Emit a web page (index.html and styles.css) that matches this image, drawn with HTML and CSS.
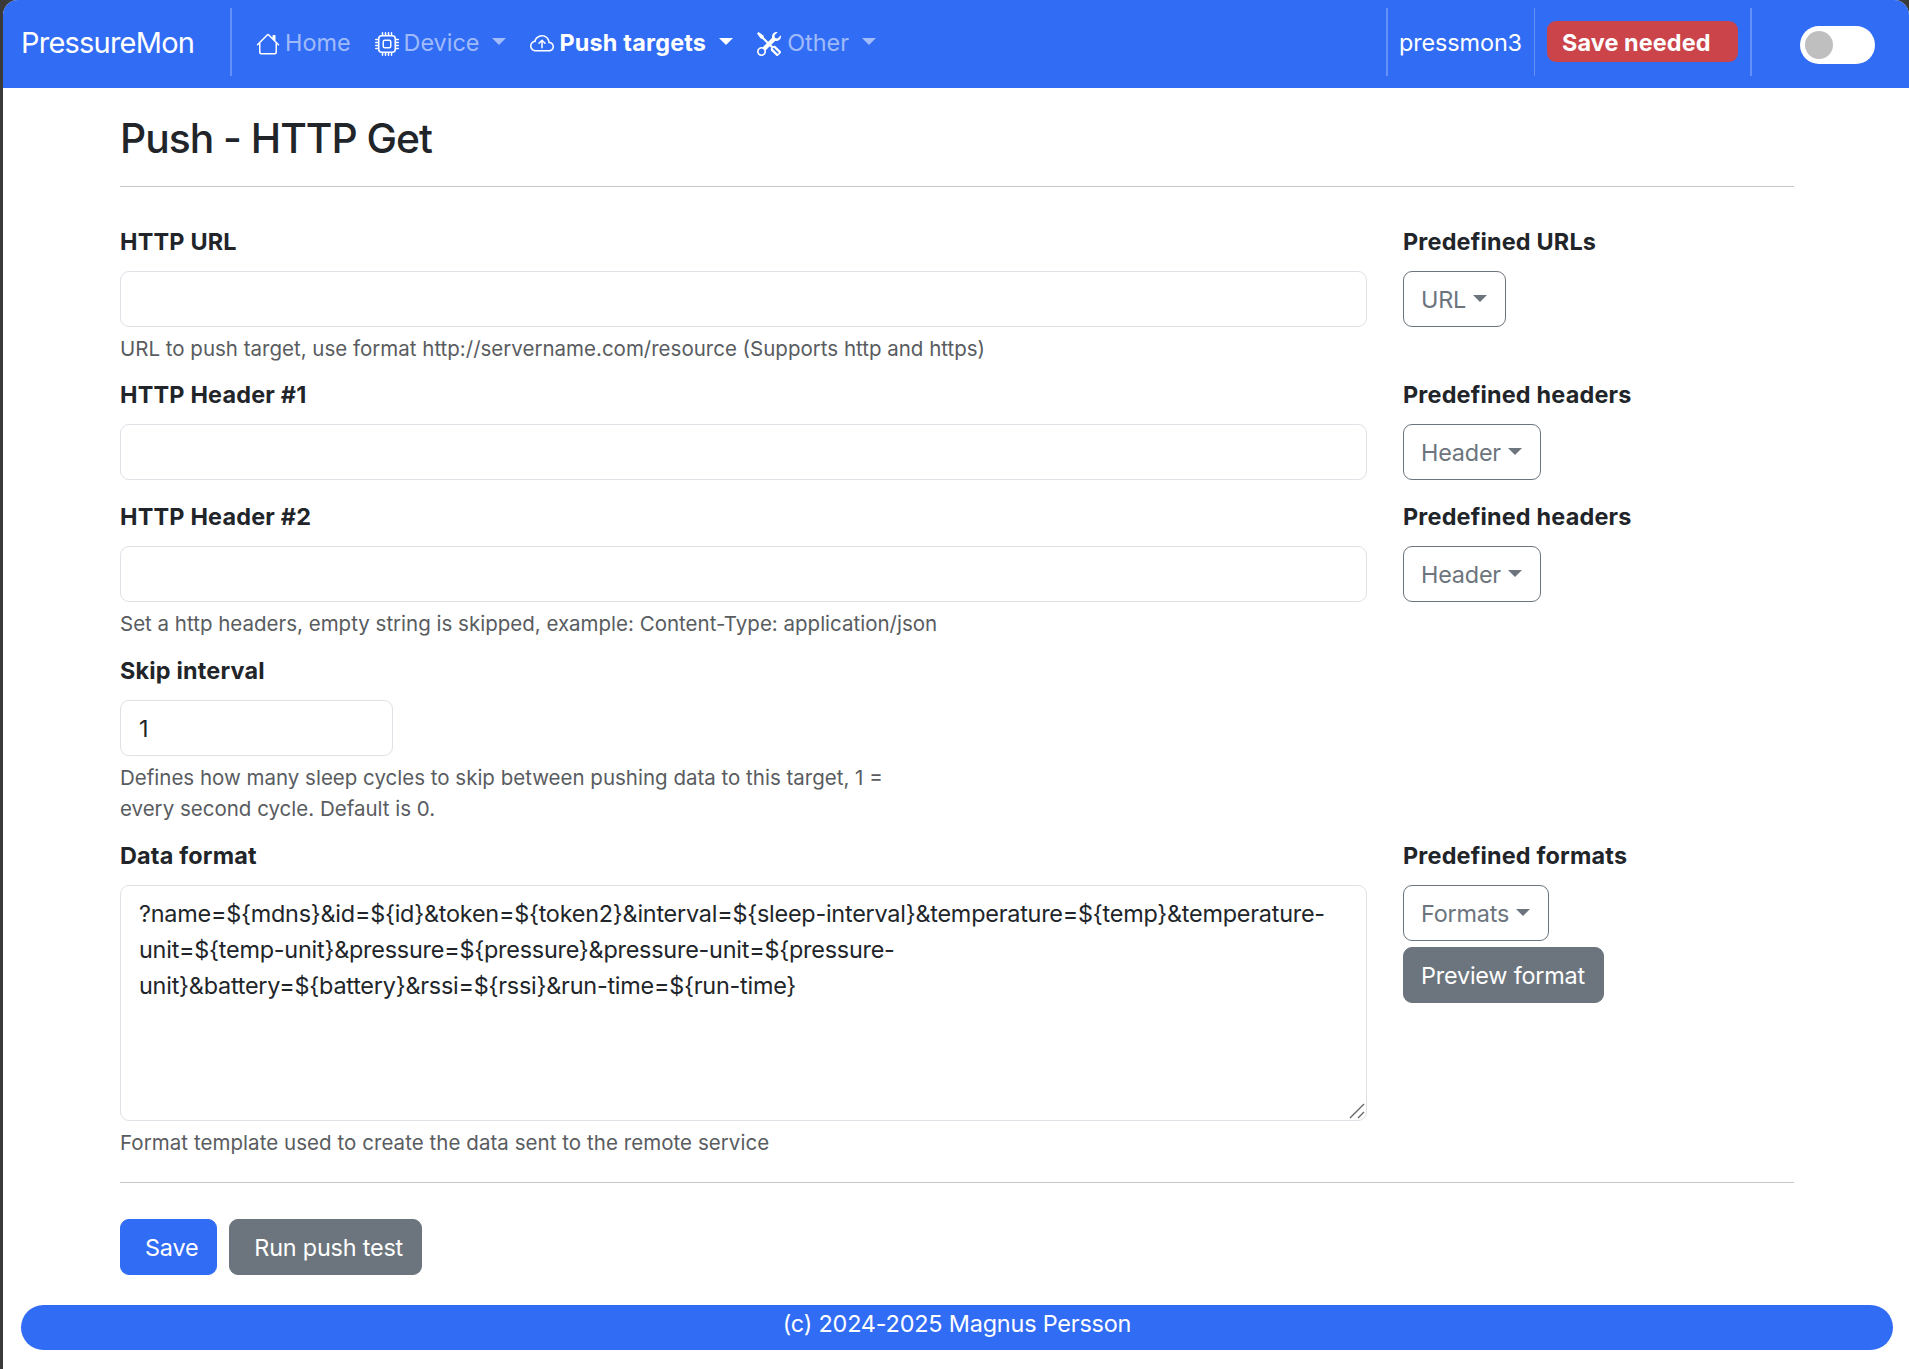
FILE: index.html
```html
<!DOCTYPE html>
<html lang="en">
<head>
<meta charset="utf-8">
<title>PressureMon</title>
<link rel="stylesheet" href="styles.css">
</head>
<body>
<div class="window">
  <nav class="navbar">
    <a class="brand">PressureMon</a>
    <div class="divider wide"></div>
    <a class="nav-link home">
      <svg class="icon" viewBox="0 0 16 16"><path d="M8.707 1.5a1 1 0 0 0-1.414 0L.646 8.146a.5.5 0 0 0 .708.708L2 8.207V13.5A1.5 1.5 0 0 0 3.5 15h9a1.5 1.5 0 0 0 1.5-1.5V8.207l.646.647a.5.5 0 0 0 .708-.708L13 5.793V2.5a.5.5 0 0 0-.5-.5h-1a.5.5 0 0 0-.5.5v1.293zM13 7.207V13.5a.5.5 0 0 1-.5.5h-9a.5.5 0 0 1-.5-.5V7.207l5-5z"/></svg>
      <span>Home</span>
    </a>
    <a class="nav-link device">
      <svg class="icon" viewBox="0 0 16 16"><path d="M5 0a.5.5 0 0 1 .5.5V2h1V.5a.5.5 0 0 1 1 0V2h1V.5a.5.5 0 0 1 1 0V2h1V.5a.5.5 0 0 1 1 0V2A2.5 2.5 0 0 1 14 4.5h1.5a.5.5 0 0 1 0 1H14v1h1.5a.5.5 0 0 1 0 1H14v1h1.5a.5.5 0 0 1 0 1H14v1h1.5a.5.5 0 0 1 0 1H14a2.5 2.5 0 0 1-2.5 2.5v1.5a.5.5 0 0 1-1 0V14h-1v1.5a.5.5 0 0 1-1 0V14h-1v1.5a.5.5 0 0 1-1 0V14h-1v1.5a.5.5 0 0 1-1 0V14A2.5 2.5 0 0 1 2 11.5H.5a.5.5 0 0 1 0-1H2v-1H.5a.5.5 0 0 1 0-1H2v-1H.5a.5.5 0 0 1 0-1H2v-1H.5a.5.5 0 0 1 0-1H2A2.5 2.5 0 0 1 4.5 2V.5A.5.5 0 0 1 5 0m-.5 3A1.5 1.5 0 0 0 3 4.5v7A1.5 1.5 0 0 0 4.5 13h7a1.5 1.5 0 0 0 1.5-1.5v-7A1.5 1.5 0 0 0 11.5 3zM5 6.5A1.5 1.5 0 0 1 6.5 5h3A1.5 1.5 0 0 1 11 6.5v3A1.5 1.5 0 0 1 9.5 11h-3A1.5 1.5 0 0 1 5 9.5zM6.5 6a.5.5 0 0 0-.5.5v3a.5.5 0 0 0 .5.5h3a.5.5 0 0 0 .5-.5v-3a.5.5 0 0 0-.5-.5z"/></svg>
      <span>Device</span><i class="caret"></i>
    </a>
    <a class="nav-link push active">
      <svg class="icon" viewBox="0 0 16 16"><path d="M7.646 5.146a.5.5 0 0 1 .708 0l2 2a.5.5 0 0 1-.708.708L8.5 6.707V10.5a.5.5 0 0 1-1 0V6.707L6.354 7.854a.5.5 0 1 1-.708-.708z"/><path d="M4.406 3.342A5.53 5.53 0 0 1 8 2c2.69 0 4.923 2 5.166 4.579C14.758 6.804 16 8.137 16 9.773 16 11.569 14.502 13 12.687 13H3.781C1.708 13 0 11.366 0 9.318c0-1.763 1.266-3.223 2.942-3.593.143-.863.698-1.723 1.464-2.383m.653.757c-.757.653-1.153 1.44-1.153 2.056v.448l-.445.049C2.064 6.805 1 7.952 1 9.318 1 10.785 2.23 12 3.781 12h8.906C13.98 12 15 10.988 15 9.773c0-1.216-1.02-2.228-2.313-2.228h-.5v-.5C12.188 4.825 10.328 3 8 3a4.53 4.53 0 0 0-2.941 1.1z"/></svg>
      <span>Push targets</span><i class="caret"></i>
    </a>
    <a class="nav-link other">
      <svg class="icon" viewBox="0 0 16 16"><path d="M1 0 0 1l2.2 3.081a1 1 0 0 0 .815.419h.07a1 1 0 0 1 .708.293l2.675 2.675-2.617 2.654A3.003 3.003 0 0 0 0 13a3 3 0 1 0 5.878-.851l2.654-2.617.968.968-.305.914a1 1 0 0 0 .242 1.023l3.27 3.27a.997.997 0 0 0 1.414 0l1.586-1.586a.997.997 0 0 0 0-1.414l-3.27-3.27a1 1 0 0 0-1.023-.242L10.5 9.5l-.96-.96 2.68-2.643A3.005 3.005 0 0 0 16 3q0-.405-.102-.777l-2.14 2.141L12 4l-.364-1.757L13.777.102a3 3 0 0 0-3.675 3.68L7.462 6.46 4.793 3.793a1 1 0 0 1-.293-.707v-.071a1 1 0 0 0-.419-.814zm9.646 10.646a.5.5 0 0 1 .708 0l2.914 2.915a.5.5 0 0 1-.707.707l-2.915-2.914a.5.5 0 0 1 0-.708M3 11l.471.242.529.026.287.445.445.287.026.529L5 13l-.242.471-.026.529-.445.287-.287.445-.529.026L3 15l-.471-.242L2 14.732l-.287-.445L1.268 14l-.026-.529L1 13l.242-.471.026-.529.445-.287.287-.445.529-.026z"/></svg>
      <span>Other</span><i class="caret"></i>
    </a>
    <div class="divider wide end"></div>
    <div class="host">pressmon3</div>
    <div class="divider"></div>
    <div class="badge">Save needed</div>
    <div class="divider wide"></div>
    <div class="switch"><div class="knob"></div></div>
  </nav>

  <main class="container">
    <h1 class="title">Push - HTTP Get</h1>
    <form class="form">
      <div class="row">
        <div class="field">
          <label class="label" for="url">HTTP URL</label>
          <input class="control" id="url" type="text">
          <p class="help">URL to push target, use format http://servername.com/resource (Supports http and https)</p>
        </div>
        <div class="side">
          <div class="label">Predefined URLs</div>
          <button class="btn outline" type="button">URL<i class="caret"></i></button>
        </div>
      </div>
      <div class="row wide-gap">
        <div class="field">
          <label class="label" for="header1">HTTP Header #1</label>
          <input class="control" id="header1" type="text">
        </div>
        <div class="side">
          <div class="label">Predefined headers</div>
          <button class="btn outline" type="button">Header<i class="caret"></i></button>
        </div>
      </div>
      <div class="row roomy">
        <div class="field">
          <label class="label" for="header2">HTTP Header #2</label>
          <input class="control" id="header2" type="text">
          <p class="help">Set a http headers, empty string is skipped, example: Content-Type: application/json</p>
        </div>
        <div class="side">
          <div class="label">Predefined headers</div>
          <button class="btn outline" type="button">Header<i class="caret"></i></button>
        </div>
      </div>
      <div class="row roomy">
        <div class="field">
          <label class="label" for="skip">Skip interval</label>
          <input class="control short" id="skip" type="text" value="1">
          <p class="help">Defines how many sleep cycles to skip between pushing data to this target, 1 =<br>every second cycle. Default is 0.</p>
        </div>
      </div>
      <div class="row">
        <div class="field">
          <div class="label">Data format</div>
          <div class="control area">?name=${mdns}&amp;id=${id}&amp;token=${token2}&amp;interval=${sleep-interval}&amp;temperature=${temp}&amp;temperature-<br>unit=${temp-unit}&amp;pressure=${pressure}&amp;pressure-unit=${pressure-<br>unit}&amp;battery=${battery}&amp;rssi=${rssi}&amp;run-time=${run-time}
            <svg class="grip" viewBox="0 0 16 16"><path d="M1 15 15 1M9 15l6-6"/></svg>
          </div>
          <p class="help last">Format template used to create the data sent to the remote service</p>
        </div>
        <div class="side">
          <div class="label">Predefined formats</div>
          <button class="btn outline" type="button">Formats<i class="caret"></i></button>
          <button class="btn secondary" type="button">Preview format</button>
        </div>
      </div>
    </form>
    <div class="actions">
      <button class="btn primary lead" type="button">Save</button>
      <button class="btn secondary lead" type="button">Run push test</button>
    </div>
  </main>
  <footer class="footer">(c) 2024-2025 Magnus Persson</footer>
</div>
</body>
</html>
```
FILE: styles.css
```css
* { box-sizing: border-box; }

body {
  margin: 0;
  background: #3a3a3a;
  color: #212529;
  font-family: Inter, "Liberation Sans", sans-serif;
  font-size: 23.4px;
  line-height: 36px;
}

.window {
  height: 1369px;
  margin-left: 3px;
  overflow: hidden;
  background: #fff;
  border-radius: 15px 15px 0 0;
}

.navbar {
  display: flex;
  height: 88px;
  padding: 8px 34px 12px 18px;
  background: #316cf4;
  color: #fff;
}

.brand {
  width: 209px;
  font-size: 29px;
  letter-spacing: -.78px;
  line-height: 70px;
  white-space: nowrap;
}

.divider { width: 1px; background: rgba(255, 255, 255, .25); }
.divider.wide { width: 2px; }
.divider.end { margin-left: auto; }

.nav-link {
  display: flex;
  align-items: center;
  height: 68px;
  margin-left: 24px;
  color: rgba(255, 255, 255, .55);
  white-space: nowrap;
}
.nav-link span { padding-top: 2px; }
.nav-link.active { color: #fff; font-weight: 700; letter-spacing: .2px; }
.nav-link .icon { width: 24px; height: 24px; margin: 4px 5px 0 0; fill: #fff; }
.nav-link.other .icon { margin-right: 6px; }

.caret {
  display: inline-block;
  border-top: 7px solid currentColor;
  border-left: 7px solid transparent;
  border-right: 7px solid transparent;
}
.nav-link .caret { margin: 0 0 1px 13px; }

.host {
  width: 146px;
  padding-left: 11px;
  letter-spacing: -.1px;
  line-height: 70px;
  white-space: nowrap;
}

.badge {
  width: 191px;
  height: 41px;
  margin: 13px 12px 0;
  padding-left: 15px;
  border-radius: 9px;
  background: #cb444a;
  font-weight: 700;
  letter-spacing: .1px;
  line-height: 44px;
  white-space: nowrap;
}

.switch {
  width: 75px;
  height: 38px;
  margin: 18px 0 0 48px;
  padding: 5px;
  border-radius: 19px;
  background: #fff;
}
.knob { width: 28px; height: 28px; border-radius: 50%; background: #bfbfbf; }

.container { width: 1674px; margin-left: 117px; }

.title {
  height: 99px;
  margin: 0 0 36px;
  padding-top: 23px;
  border-bottom: 1px solid #c7c8c9;
  font-size: 40.8px;
  font-weight: 500;
  letter-spacing: -1px;
  line-height: 54px;
}

.form { height: 960px; border-bottom: 1px solid #c7c8c9; }
.row { display: flex; gap: 36px; margin-bottom: 12px; }
.row.roomy { margin-bottom: 13px; }
.row.wide-gap { margin-bottom: 18px; }
.field { width: 1247px; }
.side { display: flex; flex-direction: column; align-items: flex-start; }
.label {
  display: block;
  margin-bottom: 10px;
  font-weight: 700;
  letter-spacing: .2px;
  line-height: 38px;
  white-space: nowrap;
}

.control {
  display: block;
  width: 100%;
  height: 56px;
  padding: 9px 18px;
  border: 1px solid #dee2e6;
  border-radius: 9px;
  outline: none;
  background: #fff;
  color: #212529;
  font: inherit;
  white-space: nowrap;
}
.control.short { width: 273px; }
.control.area { position: relative; height: 236px; padding-top: 10px; letter-spacing: -.225px; }
.grip {
  position: absolute;
  right: 1px;
  bottom: 1px;
  width: 16px;
  height: 16px;
  fill: none;
  stroke: #666;
  stroke-width: 1.4;
}

.help {
  margin: 6px 0 0;
  color: #595c5f;
  font-size: 20.5px;
  line-height: 31px;
  white-space: nowrap;
}
.help.last { letter-spacing: .05px; }

.btn {
  height: 56px;
  padding: 2px 18px 0 17px;
  border: 1px solid #6c757d;
  border-radius: 9px;
  font: inherit;
  letter-spacing: -.2px;
  white-space: nowrap;
}
.btn .caret { margin-left: 7px; vertical-align: 6.5px; }
.btn.outline { background: #fff; color: #6c757d; }
.btn.secondary { background: #6c757d; color: #fff; }
.btn.primary { border-color: #316cf4; background: #316cf4; color: #fff; }
.side .btn + .btn { margin-top: 6px; }
.actions { display: flex; gap: 12px; margin-top: 36px; }
.btn.lead { padding-left: 24px; }

.footer {
  width: 1872px;
  height: 45px;
  margin: 30px 0 0 18px;
  border-radius: 22.5px;
  background: #316cf4;
  color: #fff;
  letter-spacing: -.18px;
  line-height: 38px;
  text-align: center;
}
```
